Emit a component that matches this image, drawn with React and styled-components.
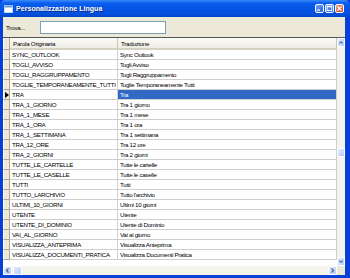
import React from 'react';
import styled, { createGlobalStyle } from 'styled-components';

const GlobalStyle = createGlobalStyle`
  html, body {
    margin: 0;
    padding: 0;
    background: #ffffff;
  }
  body {
    font-family: "Liberation Sans", Arial, sans-serif;
  }
`;

const Window = styled.div`
  width: 350px;
  height: 278px;
  box-sizing: border-box;
  display: flex;
  flex-direction: column;
  background: #0840d6;
  padding: 0 5px 3px 3px;
  overflow: hidden;
`;

const TitleBar = styled.div`
  height: 17px;
  margin: 0 -5px 0 -3px;
  padding: 0 6px 0 4px;
  display: flex;
  align-items: center;
  gap: 3px;
  background: linear-gradient(to bottom, #3c8cf6 0%, #0a5ef0 18%, #0554e4 50%, #0451de 80%, #0446c8 100%);
  border-radius: 5px 5px 0 0;
`;

const Title = styled.span`
  flex: 1;
  color: #ffffff;
  font-weight: bold;
  font-size: 7px;
  letter-spacing: 0.05px;
  text-shadow: 1px 1px 0 #0a2a8a;
`;

const CaptionButtons = styled.div`
  display: flex;
  gap: 1px;
`;

const CaptionButton = styled.div`
  width: 9px;
  height: 9px;
  box-sizing: border-box;
  border: 1px solid #ffffff;
  border-radius: 2px;
  background: ${(p) => (p.$close ? 'linear-gradient(135deg, #f09a7a, #d9401c)' : 'linear-gradient(135deg, #6fa0f8, #2a62e6)')};
  display: flex;
  align-items: center;
  justify-content: center;
`;

const Body = styled.div`
  flex: 1;
  display: flex;
  flex-direction: column;
  background: #ece9d8;
  min-height: 0;
`;

const SearchRow = styled.div`
  height: 20px;
  display: flex;
  align-items: center;
  padding: 0 0 0 3px;
  gap: 10px;
`;

const Label = styled.span`
  font-size: 6.2px;
  letter-spacing: -0.2px;
  color: #000000;
  width: 24px;
`;

const SearchBox = styled.div`
  width: 126px;
  height: 13px;
  box-sizing: border-box;
  background: #ffffff;
  border: 1px solid #7f9db9;
`;

const Grid = styled.div`
  flex: 1;
  display: grid;
  grid-template-columns: 1fr 8px;
  grid-template-rows: 1fr 9px;
  border-top: 1px solid #555555;
  background: #ffffff;
  min-height: 0;
`;

const Rows = styled.div`
  display: flex;
  flex-direction: column;
  overflow: hidden;
`;

const Row = styled.div`
  display: grid;
  grid-template-columns: 7px 108px 1fr;
  height: ${(p) => (p.$header ? '12px' : '10px')};
  flex-shrink: 0;
`;

const Selector = styled.div`
  box-sizing: border-box;
  background: #ece9d8;
  border-right: 1px solid #aca899;
  border-bottom: 1px solid #aca899;
  border-left: 1px solid #ffffff;
  display: flex;
  align-items: center;
  justify-content: center;
`;

const HeaderCell = styled.div`
  box-sizing: border-box;
  background: linear-gradient(to bottom, #fbfbf8, #efede3);
  border-right: 1px solid #c7c5b2;
  border-bottom: 2px solid #d6d2c2;
  font-size: 6.2px;
  letter-spacing: -0.25px;
  color: #000000;
  padding-left: 3px;
  display: flex;
  align-items: center;
  white-space: nowrap;
  overflow: hidden;
`;

const Cell = styled.div`
  box-sizing: border-box;
  border-right: 1px solid #cfcfcf;
  border-bottom: 1px solid #cfcfcf;
  font-size: 6.2px;
  letter-spacing: -0.3px;
  color: ${(p) => (p.$selected ? '#ffffff' : '#000000')};
  background: ${(p) => (p.$selected ? '#316ac5' : '#ffffff')};
  padding-left: 2px;
  display: flex;
  align-items: center;
  white-space: nowrap;
  overflow: hidden;
`;

const VScroll = styled.div`
  grid-row: 1;
  grid-column: 2;
  background: #f5f4ec;
  display: flex;
  flex-direction: column;
  justify-content: space-between;
  position: relative;
`;

const HScroll = styled.div`
  grid-row: 2;
  grid-column: 1;
  background: #f5f4ec;
  display: flex;
  align-items: stretch;
`;

const ScrollButton = styled.div`
  width: ${(p) => p.$w || 8}px;
  height: ${(p) => p.$h || 9}px;
  box-sizing: border-box;
  border: 1px solid #ffffff;
  border-radius: 1px;
  background: linear-gradient(135deg, #e0e9fe, #b8cdf8);
  display: flex;
  align-items: center;
  justify-content: center;
  flex-shrink: 0;
`;

const VThumb = styled(ScrollButton)`
  position: absolute;
  top: 110px;
  left: 0;
`;

const HThumb = styled(ScrollButton)`
  margin-left: 1px;
`;

const Spacer = styled.div`
  flex: 1;
`;

const Grip = styled.div`
  grid-row: 2;
  grid-column: 2;
  background: #ece9d8;
`;

const rows = [
  ['SYNC_OUTLOOK', 'Sync Outlook'],
  ['TOGLI_AVVISO', 'Togli Avviso'],
  ['TOGLI_RAGGRUPPAMENTO', 'Togli Raggruppamento'],
  ['TOGLIE_TEMPORANEAMENTE_TUTTI', 'Toglie Temporaneamente Tutti'],
  ['TRA', 'Tra'],
  ['TRA_1_GIORNO', 'Tra 1 giorno'],
  ['TRA_1_MESE', 'Tra 1 mese'],
  ['TRA_1_ORA', 'Tra 1 ora'],
  ['TRA_1_SETTIMANA', 'Tra 1 settimana'],
  ['TRA_12_ORE', 'Tra 12 ore'],
  ['TRA_2_GIORNI', 'Tra 2 giorni'],
  ['TUTTE_LE_CARTELLE', 'Tutte le cartelle'],
  ['TUTTE_LE_CASELLE', 'Tutte le caselle'],
  ['TUTTI', 'Tutti'],
  ['TUTTO_LARCHIVIO', "Tutto l'archivio"],
  ['ULTIMI_10_GIORNI', 'Ultimi 10 giorni'],
  ['UTENTE', 'Utente'],
  ['UTENTE_DI_DOMINIO', 'Utente di Dominio'],
  ['VAI_AL_GIORNO', 'Vai al giorno'],
  ['VISUALIZZA_ANTEPRIMA', 'Visualizza Anteprima'],
  ['VISUALIZZA_DOCUMENTI_PRATICA', 'Visualizza Documenti Pratica'],
];

const Chevron = ({ dir }) => {
  const paths = {
    up: 'M1.5 4.5 L3.5 2.5 L5.5 4.5',
    down: 'M1.5 2.5 L3.5 4.5 L5.5 2.5',
    left: 'M4.5 1.5 L2.5 3.5 L4.5 5.5',
    right: 'M2.5 1.5 L4.5 3.5 L2.5 5.5',
  };
  return (
    <svg width="7" height="7" viewBox="0 0 7 7">
      <path d={paths[dir]} fill="none" stroke="#4d6185" strokeWidth="1.2" />
    </svg>
  );
};

const WindowIcon = () => (
  <svg width="9" height="8" viewBox="0 0 9 8">
    <rect x="0.5" y="0.5" width="8" height="7" fill="#ffffff" stroke="#c8d8f0" />
    <rect x="0.5" y="0.5" width="8" height="2" fill="#6a9ae8" />
  </svg>
);

export default function App() {
  return (
    <>
      <GlobalStyle />
      <Window>
        <TitleBar>
          <WindowIcon />
          <Title>Personalizzazione Lingua</Title>
          <CaptionButtons>
            <CaptionButton>
              <svg width="7" height="7" viewBox="0 0 7 7">
                <rect x="1" y="4.5" width="3" height="1.2" fill="#ffffff" />
              </svg>
            </CaptionButton>
            <CaptionButton>
              <svg width="7" height="7" viewBox="0 0 7 7">
                <rect x="1.2" y="1.2" width="4.6" height="4.3" fill="none" stroke="#ffffff" strokeWidth="0.9" />
                <rect x="1.2" y="1" width="4.6" height="1.2" fill="#ffffff" />
              </svg>
            </CaptionButton>
            <CaptionButton $close>
              <svg width="7" height="7" viewBox="0 0 7 7">
                <path d="M1.5 1.5 L5.5 5.5 M5.5 1.5 L1.5 5.5" stroke="#ffffff" strokeWidth="1.2" />
              </svg>
            </CaptionButton>
          </CaptionButtons>
        </TitleBar>
        <Body>
          <SearchRow>
            <Label>Trova...</Label>
            <SearchBox />
          </SearchRow>
          <Grid>
            <Rows>
              <Row $header>
                <Selector />
                <HeaderCell>Parola Originaria</HeaderCell>
                <HeaderCell>Traduzione</HeaderCell>
              </Row>
              {rows.map(([key, value]) => {
                const selected = key === 'TRA';
                return (
                  <Row key={key}>
                    <Selector>
                      {selected && (
                        <svg width="4" height="6" viewBox="0 0 4 6">
                          <path d="M0 0 L4 3 L0 6 Z" fill="#000000" />
                        </svg>
                      )}
                    </Selector>
                    <Cell>{key}</Cell>
                    <Cell $selected={selected}>{value}</Cell>
                  </Row>
                );
              })}
            </Rows>
            <VScroll>
              <ScrollButton>
                <Chevron dir="up" />
              </ScrollButton>
              <VThumb $h={9} />
              <ScrollButton>
                <Chevron dir="down" />
              </ScrollButton>
            </VScroll>
            <HScroll>
              <ScrollButton $w={9} $h={9}>
                <Chevron dir="left" />
              </ScrollButton>
              <HThumb $w={9} $h={9} />
              <Spacer />
              <ScrollButton $w={9} $h={9}>
                <Chevron dir="right" />
              </ScrollButton>
            </HScroll>
            <Grip />
          </Grid>
        </Body>
      </Window>
    </>
  );
}
